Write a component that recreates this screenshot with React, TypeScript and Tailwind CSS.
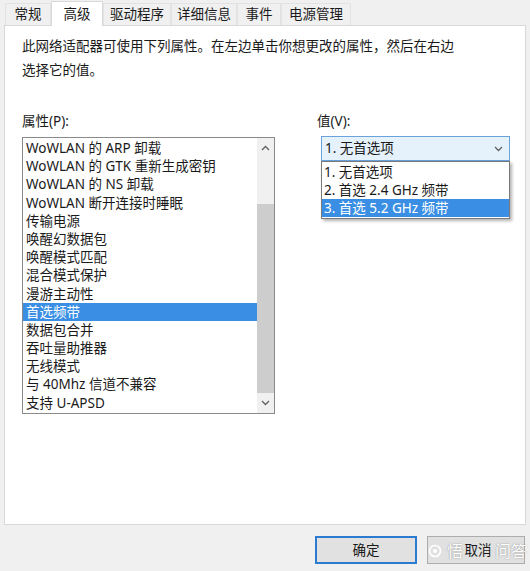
import React from "react";

const FONT = { fontFamily: '"Noto Sans", "Noto Sans CJK SC", sans-serif' };

const tabs = ["常规", "高级", "驱动程序", "详细信息", "事件", "电源管理"];
const tabW = [46, 52, 68, 66, 44, 70];

const props = [
  "WoWLAN 的 ARP 卸载",
  "WoWLAN 的 GTK 重新生成密钥",
  "WoWLAN 的 NS 卸载",
  "WoWLAN 断开连接时睡眠",
  "传输电源",
  "唤醒幻数据包",
  "唤醒模式匹配",
  "混合模式保护",
  "漫游主动性",
  "首选频带",
  "数据包合并",
  "吞吐量助推器",
  "无线模式",
  "与 40Mhz 信道不兼容",
  "支持 U-APSD",
];

const options = ["1. 无首选项", "2. 首选 2.4 GHz 频带", "3. 首选 5.2 GHz 频带"];

function Chevron({ up = false, className = "" }: { up?: boolean; className?: string }) {
  return (
    <svg width="9" height="6" viewBox="0 0 9 6" className={className}>
      <path
        d={up ? "M1 5 L4.5 1.5 L8 5" : "M1 1 L4.5 4.5 L8 1"}
        fill="none"
        stroke="#606060"
        strokeWidth="1.3"
      />
    </svg>
  );
}

export default function App() {
  return (
    <div
      className="relative w-[530px] h-[571px] bg-[#f0f0f0] overflow-hidden text-[13.5px] text-[#1a1a1a]"
      style={FONT}
    >
      {/* Tabs */}
      <div className="flex items-end h-[25px] pl-[5px] relative z-10">
        {tabs.map((t, i) =>
          i === 1 ? (
            <div
              key={t}
              className="h-[25px] -mb-px bg-white border border-b-0 border-[#d9d9d9] flex items-center justify-center"
              style={{ width: tabW[i] }}
            >
              {t}
            </div>
          ) : (
            <div
              key={t}
              className="h-[22px] border border-b-0 border-[#e3e3e3] bg-[#f0f0f0] flex items-center justify-center"
              style={{ width: tabW[i] }}
            >
              {t}
            </div>
          )
        )}
      </div>

      {/* Panel */}
      <div className="mx-[4px] h-[500px] bg-white border border-[#d9d9d9] relative">
        <div className="pl-[17px] pt-[8px] leading-[24px]">
          <div>此网络适配器可使用下列属性。在左边单击你想更改的属性，然后在右边</div>
          <div>选择它的值。</div>
        </div>

        <div className="flex mt-[29px] pl-[17px]">
          {/* Left column */}
          <div className="w-[253px]">
            <div className="leading-[20px]">属性(P):</div>
            <div className="mt-[6px] h-[277px] border border-[#8a8a8a] flex bg-white">
              <div className="flex-1 pt-[1px]">
                {props.map((p, i) => (
                  <div
                    key={p}
                    className={
                      "h-[18.2px] leading-[18.2px] pl-[3px] whitespace-nowrap " +
                      (i === 9 ? "bg-[#3a8fe4] text-white" : "")
                    }
                  >
                    {p}
                  </div>
                ))}
              </div>
              <div className="w-[17px] bg-[#f0f0f0] flex flex-col items-center">
                <div className="h-[20px] flex items-center justify-center">
                  <Chevron up />
                </div>
                <div className="flex-1 w-full flex flex-col">
                  <div className="h-[46px]" />
                  <div className="flex-1 bg-[#cdcdcd]" />
                </div>
                <div className="h-[20px] flex items-center justify-center">
                  <Chevron />
                </div>
              </div>
            </div>
          </div>

          {/* Right column */}
          <div className="ml-[42px] w-[193px] relative">
            <div className="leading-[20px]">值(V):</div>
            <div className="mt-[5px] ml-[4px] h-[25px] bg-[#e5f1fb] border border-[#6aa2dc] flex items-center justify-between pl-[3px] pr-[6px]">
              <span>1. 无首选项</span>
              <Chevron />
            </div>
            <div className="absolute left-[4px] top-[50px] w-[189px] bg-white border border-[#7a7a7a] shadow-[2px_2px_3px_rgba(0,0,0,0.3)] py-[1px]">
              {options.map((o, i) => (
                <div
                  key={o}
                  className={
                    "h-[18px] leading-[18px] pl-[2px] whitespace-nowrap " +
                    (i === 2 ? "bg-[#3a8fe4] text-white" : "")
                  }
                >
                  {o}
                </div>
              ))}
            </div>
          </div>
        </div>
      </div>

      {/* Buttons */}
      <div className="flex justify-end gap-[10px] pr-[5px] pt-[11px]">
        <button className="w-[102px] h-[28px] bg-[#e1e1e1] border-2 border-[#2b7bd0] flex items-center justify-center">
          确定
        </button>
        <button className="relative w-[98px] h-[28px] bg-[#e1e1e1] border border-[#adadad] flex items-center justify-center">
          <span className="pl-[4px]">取消</span>
        </button>
      </div>

      {/* Watermark */}
      <div className="absolute left-[428px] top-[540px] h-[22px] flex items-center whitespace-nowrap text-[16px] leading-[22px] text-white pointer-events-none [text-shadow:0_0_1.5px_rgba(0,0,0,0.45)]">
        <svg width="14" height="14" viewBox="0 0 14 14" className="mr-[5px] shrink-0">
          <circle cx="7" cy="7" r="5.5" fill="none" stroke="#ffffff" strokeWidth="1.6" />
          <circle cx="7" cy="7" r="2" fill="#ffffff" />
        </svg>
        <span>悟</span>
        <span className="ml-[32px]">问答</span>
      </div>
    </div>
  );
}
